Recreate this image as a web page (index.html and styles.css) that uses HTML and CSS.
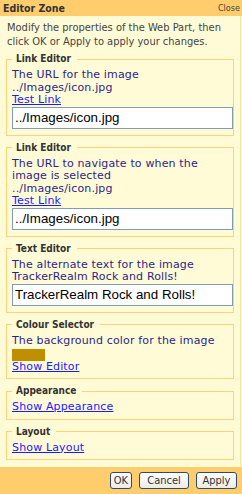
FILE: index.html
```html
<!DOCTYPE html>
<html>
<head>
  <meta charset="UTF-8" />
  <title>Editor Zone</title>
  <link rel="stylesheet" href="styles.css">
</head>
<body>

  <div class="zone">
    <div class="zone-head">
      <span class="zone-title">Editor Zone</span>
      <a class="zone-close" href="#">Close</a>
    </div>

    <div class="zone-body">
      <div class="intro">Modify the properties of the Web Part, then click OK or Apply to apply your changes.</div>

      <fieldset class="part">
        <legend>Link Editor</legend>
        <div class="line">The URL for the image</div>
        <div class="line">../Images/icon.jpg</div>
        <div class="line"><a href="#">Test Link</a></div>
        <input class="field" type="text" value="../Images/icon.jpg">
      </fieldset>

      <fieldset class="part">
        <legend>Link Editor</legend>
        <div class="line">The URL to navigate to when the image is selected</div>
        <div class="line">../Images/icon.jpg</div>
        <div class="line"><a href="#">Test Link</a></div>
        <input class="field" type="text" value="../Images/icon.jpg">
      </fieldset>

      <fieldset class="part">
        <legend>Text Editor</legend>
        <div class="line">The alternate text for the image</div>
        <div class="line">TrackerRealm Rock and Rolls!</div>
        <input class="field" type="text" value="TrackerRealm Rock and Rolls!">
      </fieldset>

      <fieldset class="part">
        <legend>Colour Selector</legend>
        <div class="line">The background color for the image</div>
        <div class="swatch"></div>
        <div class="line"><a href="#">Show Editor</a></div>
      </fieldset>

      <fieldset class="part">
        <legend>Appearance</legend>
        <div class="line"><a href="#">Show Appearance</a></div>
      </fieldset>

      <fieldset class="part">
        <legend>Layout</legend>
        <div class="line"><a href="#">Show Layout</a></div>
      </fieldset>
    </div>

    <div class="zone-foot">
      <button class="btn">OK</button>
      <button class="btn">Cancel</button>
      <button class="btn">Apply</button>
    </div>
  </div>

</body>
</html>
```

FILE: styles.css
```css
body { margin: 0; background: #fffbd6; font-family: "DejaVu Sans Condensed", "DejaVu Sans", sans-serif; }
.zone { width: 242px; height: 494px; display: flex; flex-direction: column; }

.zone-head {
  height: 16px; background: #ffcd6b;
  display: flex; justify-content: space-between; align-items: center;
  padding: 0 2px 0 3px;
}
.zone-title { font-size: 10.5px; font-weight: bold; color: #333; font-stretch: condensed; }
.zone-close { font-size: 9px; color: #444; text-decoration: none; font-stretch: condensed; }

.zone-body { flex: 1; padding: 5px 6px 0 6px; border-right: 1px solid #ffe3a3; margin-right: 1px; }
.intro {
  font-size: 11px; line-height: 14px; color: #444;
  font-stretch: condensed; padding-left: 1px; margin-bottom: 4px;
}

.part {
  margin: 0 0 6px 0; border: 1px solid #ffd27a;
  padding: 4px 5px 5px 5px; min-width: 0;
}
.part legend {
  font-size: 10px; line-height: 12px; font-weight: bold; color: #333;
  padding: 0 6px 0 4px; font-stretch: condensed;
}
.line {
  font-family: "DejaVu Sans", sans-serif;
  font-size: 11px; line-height: 12.5px; color: #2c1f8c; letter-spacing: 0.15px;
}
.line a { color: #1a1aff; }

.field {
  display: block; box-sizing: border-box;
  width: calc(100% + 5px); height: 22px; margin: 0 0 1px 0;
  border: 1px solid #7f9db9; background: white; padding: 0 2px;
  font-family: "Liberation Sans", Arial, sans-serif; font-size: 13.33px; color: black;
}
.swatch { width: 33px; height: 12px; background: #c08f00; margin: 1.5px 0 0 0; }

.zone-foot {
  height: 27px; background: #ffcd6b;
  display: flex; justify-content: flex-end; align-items: center; gap: 7px;
  padding-right: 5px;
}
.btn {
  height: 17px; padding: 0 3px;
  border: 1px solid #2f4a6e; border-radius: 3px;
  background: linear-gradient(#ffffff, #ecebe4);
  font-family: "DejaVu Sans Condensed", "DejaVu Sans", sans-serif; font-stretch: condensed;
  font-size: 11px; color: #333;
}
.btn:nth-child(2) { width: 50px; }
.btn:nth-child(3) { width: 41px; }
```
